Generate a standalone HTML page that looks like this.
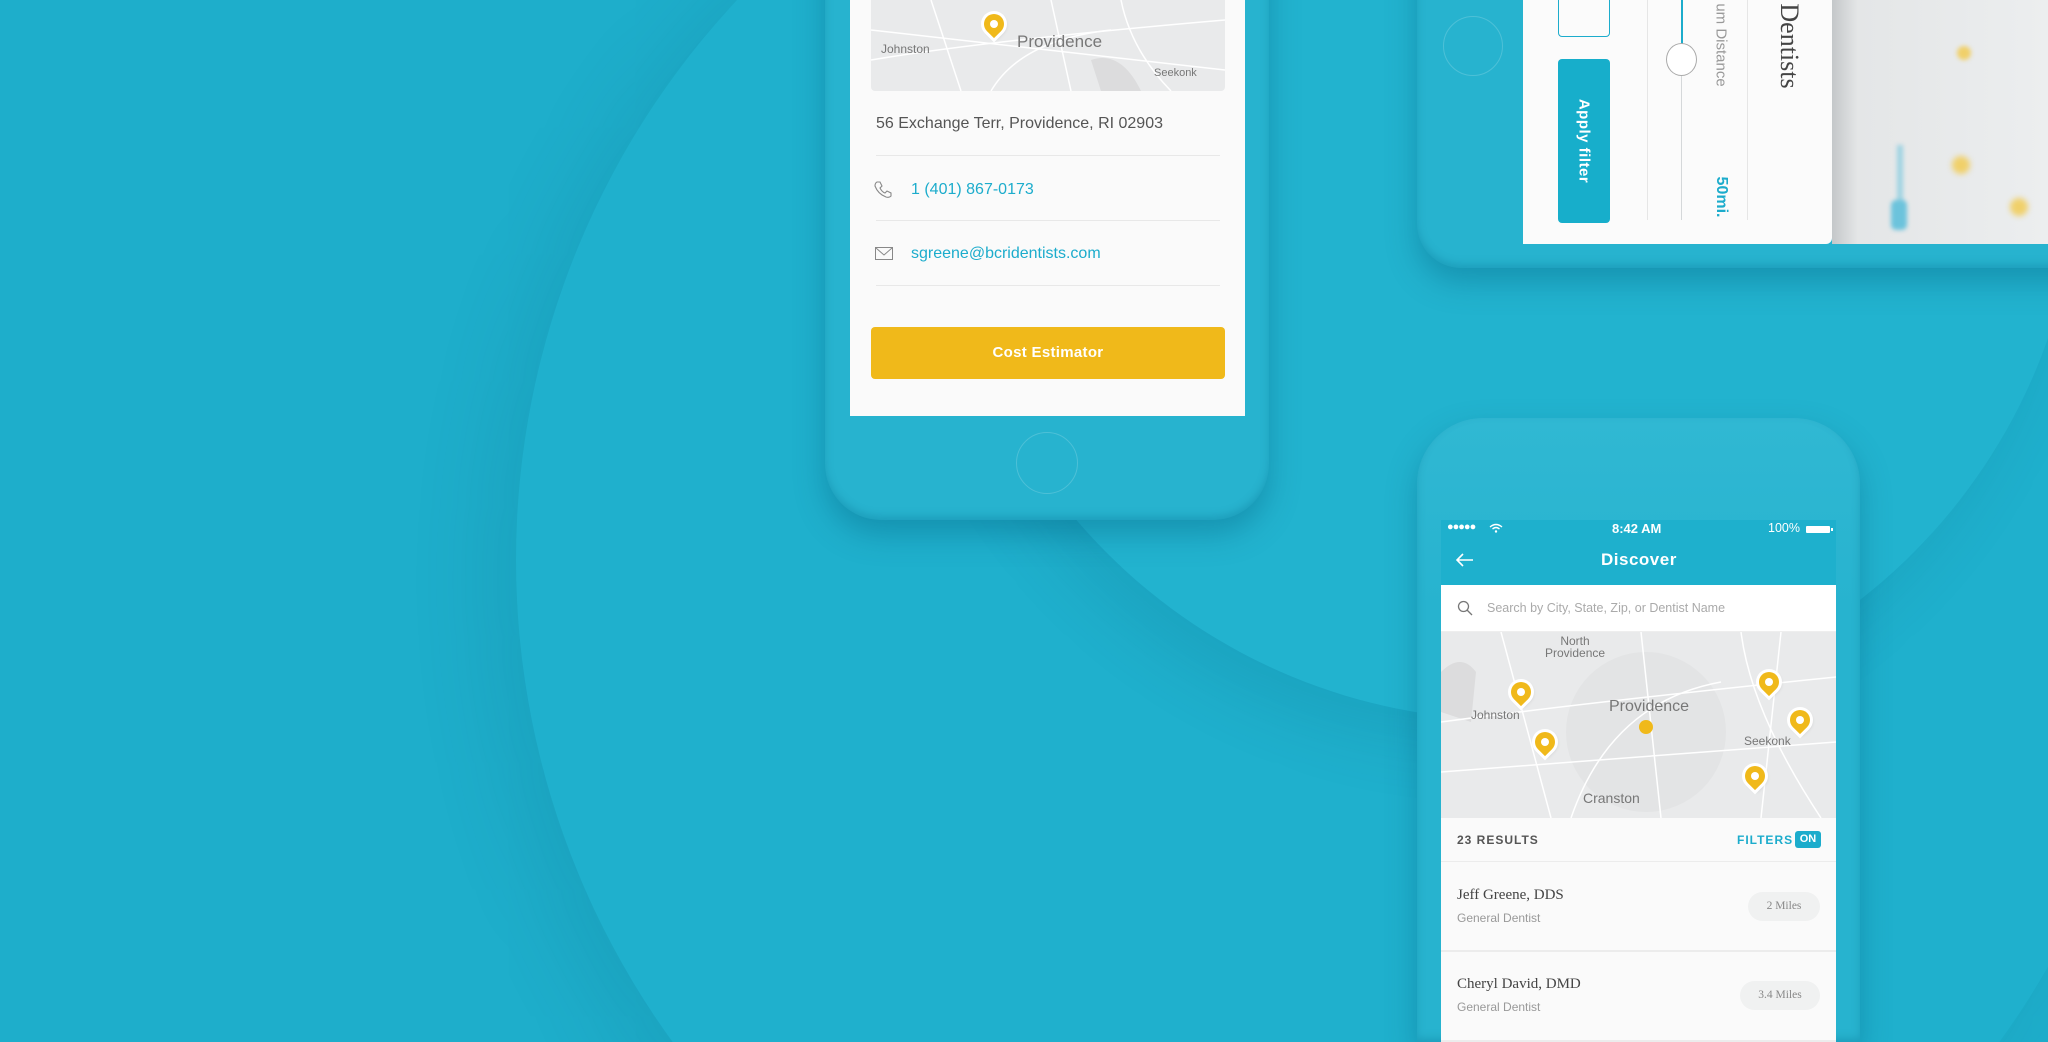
<!DOCTYPE html>
<html style="width:2048px;height:1042px;overflow:hidden"><head><meta charset="utf-8"><style>
*{margin:0;padding:0;box-sizing:border-box}
body{width:2048px;height:1042px;overflow:hidden;background:#1eaecb;font-family:"Liberation Sans",sans-serif}
#wrap{position:relative;width:2048px;height:1042px;overflow:hidden;background:#1eaecb}
.abs{position:absolute}
.circ{position:absolute;border-radius:50%}
.phone{position:absolute;background:#27b3cf;box-shadow:0 14px 30px rgba(0,90,120,.35),inset 0 -4px 8px rgba(0,100,130,.25)}
.pin{position:absolute;width:20px;height:20px;background:#f0b91a;border-radius:50% 50% 50% 0;transform:rotate(-45deg);box-shadow:0 0 0 3px #fff,0 2px 4px rgba(0,0,0,.2)}
.pin:after{content:"";position:absolute;left:6px;top:6px;width:8px;height:8px;background:#fff;border-radius:50%}
.map{background:#e9eaeb;overflow:hidden}
.mt{position:absolute;color:#777;font-size:13px}
</style></head><body><div id="wrap">
<div class="circ" style="left:516px;top:-260px;width:1640px;height:1640px;background:#1fb0cd;box-shadow:-30px 20px 80px rgba(0,80,110,.12)"></div>
<div class="circ" style="left:940px;top:-420px;width:1140px;height:1140px;background:#22b3cf;box-shadow:-20px 30px 60px rgba(0,80,110,.12)"></div>

<div class="phone" style="left:825px;top:-200px;width:444px;height:720px;border-radius:0 0 56px 56px"></div>
<div class="abs" style="left:850px;top:0;width:395px;height:416px;background:#fafafa"></div>
<div class="abs map" style="left:871px;top:0;width:354px;height:91px;border-radius:0 0 4px 4px">
<svg width="354" height="91" style="position:absolute"><g stroke="#fff" stroke-width="1.5" fill="none"><path d="M0 60 Q120 40 354 20"/><path d="M60 0 L90 91"/><path d="M180 0 L200 91"/><path d="M0 30 L354 70"/><path d="M250 0 Q260 50 300 91"/><path d="M120 91 Q150 40 240 30"/></g><path d="M220 60 Q250 50 270 91 L230 91Z" fill="#dcdcdd"/></svg>
<div class="mt" style="left:10px;top:42px;font-size:12px">Johnston</div>
<div class="mt" style="left:146px;top:32px;font-size:17px">Providence</div>
<div class="mt" style="left:283px;top:67px;font-size:11px">Seekonk</div>
<div class="pin" style="left:113px;top:14px"></div>
</div>
<div class="abs" style="left:876px;top:115px;font-size:16px;color:#555">56 Exchange Terr, Providence, RI 02903</div>
<div class="abs" style="left:876px;top:155px;width:344px;height:1px;background:#e8e8e8"></div>
<svg class="abs" style="left:874px;top:181px" width="18" height="18" viewBox="0 0 18 18"><path d="M3 1 L6 1 L8 5 L6 7 Q8 11 11 12 L13 10 L17 12 L17 15 Q15 17 12 16 Q4 13 1 5 Q1 2 3 1Z" fill="none" stroke="#888" stroke-width="1.1"/></svg>
<div class="abs" style="left:911px;top:181px;font-size:16px;color:#1caccc">1 (401) 867-0173</div>
<div class="abs" style="left:876px;top:220px;width:344px;height:1px;background:#e8e8e8"></div>
<svg class="abs" style="left:875px;top:247px" width="18" height="14"><rect x="0.5" y="0.5" width="17" height="12" fill="none" stroke="#888"/><path d="M1 1 L9 8 L17 1" fill="none" stroke="#888"/></svg>
<div class="abs" style="left:911px;top:245px;font-size:16px;color:#1caccc">sgreene@bcridentists.com</div>
<div class="abs" style="left:876px;top:285px;width:344px;height:1px;background:#e8e8e8"></div>
<div class="abs" style="left:871px;top:327px;width:354px;height:52px;background:#f0b91a;border-radius:4px;color:#fff;font-size:15px;font-weight:bold;text-align:center;line-height:52px;letter-spacing:.3px">Cost Estimator</div>
<div class="circ" style="left:1016px;top:432px;width:62px;height:62px;border:1.5px solid rgba(255,255,255,.18)"></div>

<div class="phone" style="left:1417px;top:-300px;width:800px;height:568px;border-radius:0 0 0 44px"></div>
<div class="circ" style="left:1443px;top:16px;width:60px;height:60px;border:1.5px solid rgba(255,255,255,.18)"></div>
<div class="abs" style="left:1523px;top:0;width:309px;height:244px;background:#fbfbfb;border-radius:0 0 6px 0"></div>
<div class="abs" style="left:1832px;top:0;width:216px;height:244px;background:linear-gradient(90deg,#c4c7c9,#e4e6e7 12%,#eceeef)"></div>
<div class="circ" style="left:1957px;top:46px;width:14px;height:14px;background:#f0d06a;filter:blur(2px)"></div>
<div class="circ" style="left:1952px;top:156px;width:18px;height:18px;background:#f0d06a;filter:blur(3px)"></div>
<div class="circ" style="left:2010px;top:198px;width:18px;height:18px;background:#f0d06a;filter:blur(3px)"></div>
<div class="abs" style="left:1897px;top:145px;width:6px;height:60px;background:#9fd3e2;filter:blur(2px)"></div>
<div class="abs" style="left:1891px;top:200px;width:16px;height:30px;background:#6cc3dc;border-radius:5px;filter:blur(2px)"></div>
<div class="abs" style="left:1558px;top:-5px;width:52px;height:42px;border:1.5px solid #1caccc;border-radius:4px"></div>
<div class="abs" style="left:1558px;top:59px;width:52px;height:164px;background:#17aecb;border-radius:4px"></div>
<div class="abs" style="left:1584px;top:141px;transform:translate(-50%,-50%) rotate(90deg);color:#fff;font-size:15px;font-weight:bold;white-space:nowrap;letter-spacing:.5px">Apply filter</div>
<div class="abs" style="left:1647px;top:0;width:1px;height:220px;background:#e6e6e6"></div>
<div class="abs" style="left:1681px;top:0;width:2px;height:44px;background:#1caccc"></div>
<div class="abs" style="left:1681px;top:74px;width:1px;height:146px;background:#d5d8da"></div>
<div class="circ" style="left:1666px;top:43px;width:31px;height:33px;border:1px solid #aaa;background:#fff"></div>
<div class="abs" style="left:1721px;top:45px;transform:translate(-50%,-50%) rotate(90deg);color:#999;font-size:15px;white-space:nowrap">um Distance</div>
<div class="abs" style="left:1721px;top:197px;transform:translate(-50%,-50%) rotate(90deg);color:#1caccc;font-size:16px;font-weight:bold;white-space:nowrap">50mi.</div>
<div class="abs" style="left:1747px;top:0;width:1px;height:220px;background:#e6e6e6"></div>
<div class="abs" style="left:1789px;top:46px;transform:translate(-50%,-50%) rotate(90deg);color:#444;font-size:26px;font-family:'Liberation Serif',serif;white-space:nowrap">Dentists</div>

<div class="phone" style="left:1417px;top:418px;width:443px;height:624px;border-radius:66px 66px 0 0;background:linear-gradient(180deg,#30b8d3,#27b3cf 30%)"></div>
<div class="abs" style="left:1441px;top:520px;width:395px;height:522px;background:#fafafa"></div>
<div class="abs" style="left:1441px;top:520px;width:395px;height:65px;background:#1eb0cd"></div>
<div class="abs" style="left:1447px;top:521px;color:#fff;font-size:11px;letter-spacing:-1px">●●●●●</div>
<svg class="abs" style="left:1489px;top:523px" width="14" height="10"><path d="M1 4 Q7 -1 13 4 M3.5 6 Q7 3 10.5 6" fill="none" stroke="#fff" stroke-width="1.4"/><circle cx="7" cy="8.5" r="1.2" fill="#fff"/></svg>
<div class="abs" style="left:1612px;top:521px;color:#fff;font-size:13px;font-weight:bold">8:42 AM</div>
<div class="abs" style="left:1768px;top:521px;color:#fff;font-size:12.5px">100%</div>
<div class="abs" style="left:1806px;top:526px;width:24px;height:7px;background:#fff;border-radius:1px"></div>
<div class="abs" style="left:1831px;top:528px;width:2px;height:3px;background:#fff"></div>
<svg class="abs" style="left:1456px;top:553px" width="18" height="14"><path d="M17 7 L2 7 M7 1 L1 7 L7 13" fill="none" stroke="#fff" stroke-width="1.6"/></svg>
<div class="abs" style="left:1601px;top:550px;color:#fff;font-size:17px;font-weight:bold;letter-spacing:.5px">Discover</div>
<div class="abs" style="left:1441px;top:585px;width:395px;height:47px;background:#fff;border-bottom:1px solid #eee"></div>
<svg class="abs" style="left:1457px;top:600px" width="16" height="16"><circle cx="6.5" cy="6.5" r="5" fill="none" stroke="#777" stroke-width="1.3"/><path d="M10 10 L15 15" stroke="#777" stroke-width="1.3"/></svg>
<div class="abs" style="left:1487px;top:601px;color:#aaa;font-size:12.5px">Search by City, State, Zip, or Dentist Name</div>
<div class="abs map" style="left:1441px;top:632px;width:395px;height:186px">
<svg width="395" height="186" style="position:absolute"><path d="M0 40 Q20 20 35 40 L30 90 L0 80Z" fill="#dcdcdd"/><circle cx="205" cy="100" r="80" fill="#e3e4e5"/><g stroke="#fff" stroke-width="1.5" fill="none"><path d="M0 90 Q150 70 395 45"/><path d="M60 0 L110 186"/><path d="M200 0 L220 186"/><path d="M0 140 L395 110"/><path d="M300 0 Q310 80 380 186"/><path d="M130 186 Q170 70 280 50"/><path d="M340 0 L320 186"/></g></svg>
<div class="mt" style="left:104px;top:3px;text-align:center;line-height:12px;font-size:12px">North<br>Providence</div>
<div class="mt" style="left:168px;top:66px;font-size:16px">Providence</div>
<div class="mt" style="left:30px;top:76px;font-size:12px">Johnston</div>
<div class="mt" style="left:303px;top:102px;font-size:12px">Seekonk</div>
<div class="mt" style="left:142px;top:158px;font-size:14px">Cranston</div>
<div class="pin" style="left:70px;top:50px"></div>
<div class="pin" style="left:94px;top:100px"></div>
<div class="pin" style="left:318px;top:40px"></div>
<div class="pin" style="left:349px;top:78px"></div>
<div class="pin" style="left:304px;top:134px"></div>
<div class="circ" style="left:198px;top:88px;width:14px;height:14px;background:#f0b91a"></div>
</div>
<div class="abs" style="left:1457px;top:833px;color:#555;font-size:12px;font-weight:bold;letter-spacing:1px">23 RESULTS</div>
<div class="abs" style="left:1737px;top:833px;color:#1caccc;font-size:12px;font-weight:bold;letter-spacing:1px">FILTERS</div>
<div class="abs" style="left:1795px;top:831px;width:26px;height:17px;background:#1caccc;border-radius:3px;color:#fff;font-size:11px;font-weight:bold;text-align:center;line-height:17px">ON</div>
<div class="abs" style="left:1441px;top:861px;width:395px;height:1px;background:#ececec"></div>
<div class="abs" style="left:1457px;top:887px;color:#444;font-size:15px;font-family:'Liberation Serif',serif">Jeff Greene, DDS</div>
<div class="abs" style="left:1457px;top:911px;color:#999;font-size:12px">General Dentist</div>
<div class="abs" style="left:1748px;top:892px;width:72px;height:29px;background:#f0f1f1;border-radius:15px;color:#888;font-size:11.5px;text-align:center;line-height:29px;font-family:'Liberation Serif',serif">2 Miles</div>
<div class="abs" style="left:1441px;top:950px;width:395px;height:2px;background:#ececec"></div>
<div class="abs" style="left:1457px;top:976px;color:#444;font-size:15px;font-family:'Liberation Serif',serif">Cheryl David, DMD</div>
<div class="abs" style="left:1457px;top:1000px;color:#999;font-size:12px">General Dentist</div>
<div class="abs" style="left:1740px;top:981px;width:80px;height:29px;background:#f0f1f1;border-radius:15px;color:#888;font-size:11.5px;text-align:center;line-height:29px;font-family:'Liberation Serif',serif">3.4 Miles</div>
<div class="abs" style="left:1441px;top:1040px;width:395px;height:2px;background:#ececec"></div>
</div></body></html>
